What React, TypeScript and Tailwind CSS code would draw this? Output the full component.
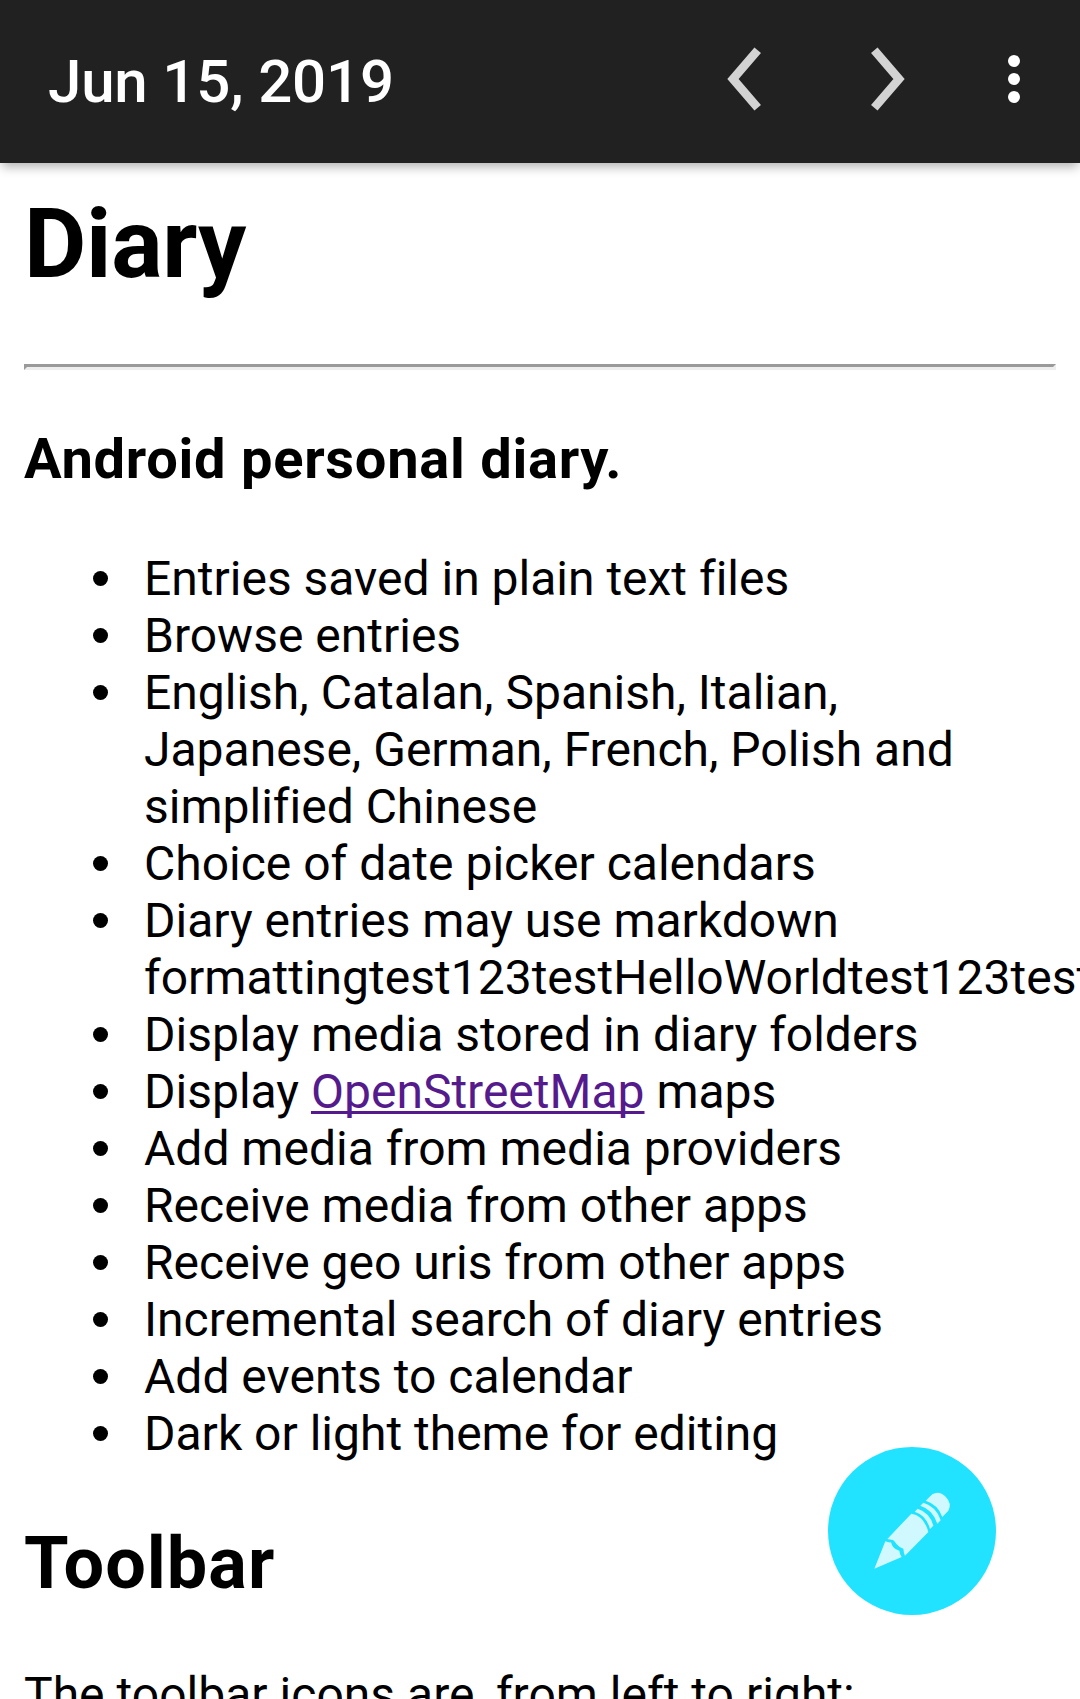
import React from 'react';

const before = [
  'Entries saved in plain text files',
  'Browse entries',
  'English, Catalan, Spanish, Italian, Japanese, German, French, Polish and simplified Chinese',
  'Choice of date picker calendars',
  'Diary entries may use markdown formattingtest123testHelloWorldtest123test',
  'Display media stored in diary folders',
];
const after = [
  'Add media from media providers',
  'Receive media from other apps',
  'Receive geo uris from other apps',
  'Incremental search of diary entries',
  'Add events to calendar',
  'Dark or light theme for editing',
];

function Item({ children }: { children: React.ReactNode }) {
  return (
    <li className="flex">
      <span className="mt-[21px] mr-[36px] h-[15px] w-[15px] shrink-0 rounded-full bg-black" />
      <span className="w-[843px] shrink-0">{children}</span>
    </li>
  );
}

function Pencil() {
  return (
    <svg width="100" height="100" viewBox="0 0 300 300" fill="#d0f9ff">
      <path d="M43 266L76 184Q85 188 93 187Q98 204 108 208L118 212Q119 223 125 231Z" />
      <path d="M82 177L154 101Q192 107 205 156L135 227Q131 218 130 206Q116 201 110 193Q103 182 99 180Q90 179 82 177Z" />
      <path d="M164 95L173 86Q210 98 220 137L210 147Q199 106 164 95Z" />
      <path d="M181 77L190 68Q230 80 242 121L232 131Q219 89 181 77Z" />
      <path d="M197 62L217 43Q237 31 257 50Q277 71 265 92L247 111Q235 74 197 62Z" />
    </svg>
  );
}

export default function App() {
  return (
    <div className="relative h-[1699px] w-full overflow-hidden bg-white font-['Roboto',sans-serif] text-black [font-variant-ligatures:none]">
      <header className="flex h-[163px] items-center bg-[#212121] pl-[48px] text-white shadow-[0_6px_10px_-2px_rgba(0,0,0,0.3)]">
        <h1 className="w-[680px] text-[60px] leading-[70px] font-medium tracking-[-0.17px]">Jun 15, 2019</h1>
        <svg width="352" height="163" viewBox="728 0 352 163" fill="none" className="overflow-visible">
          <path d="M757.7 50.3L733 79L757.7 107.7" stroke="#d3d3d3" strokeWidth="8.6" />
          <path d="M874.3 50.3L899 79L874.3 107.7" stroke="#d3d3d3" strokeWidth="8.6" />
          <g fill="#fff">
            <circle cx="1014" cy="61" r="6" />
            <circle cx="1014" cy="79" r="6" />
            <circle cx="1014" cy="97" r="6" />
          </g>
        </svg>
      </header>
      <main className="px-[24px]">
        <h1 className="pt-[25px] text-[96px] leading-[113px] font-bold tracking-[-0.3px]">Diary</h1>
        <hr className="mt-[63px] h-[6px] border-[3px] border-[#9a9a9a] border-r-[#eee] border-b-[#eee]" />
        <h3 className="mt-[56px] text-[56px] leading-[66px] font-bold tracking-[0.72px]">Android personal diary.</h3>
        <ul className="mt-[58px] pl-[69px] text-[48px] leading-[57px]">
          {before.map((t) => <Item key={t}>{t}</Item>)}
          <Item>Display <a className="text-[#551a8b] underline decoration-[3px] underline-offset-[3px] [text-decoration-skip-ink:none]">OpenStreetMap</a> maps</Item>
          {after.map((t) => <Item key={t}>{t}</Item>)}
        </ul>
        <h2 className="mt-[60px] text-[72px] leading-[84px] font-bold tracking-[1px]">Toolbar</h2>
        <p className="mt-[60px] text-[48px] leading-[57px] tracking-[0.02px]">The toolbar icons are, from left to right:</p>
      </main>
      <button aria-label="Edit" className="absolute top-[1447px] left-[828px] flex h-[168px] w-[168px] items-start rounded-full bg-[#22e3ff] pt-[33px] pl-[32px]">
        <Pencil />
      </button>
    </div>
  );
}
